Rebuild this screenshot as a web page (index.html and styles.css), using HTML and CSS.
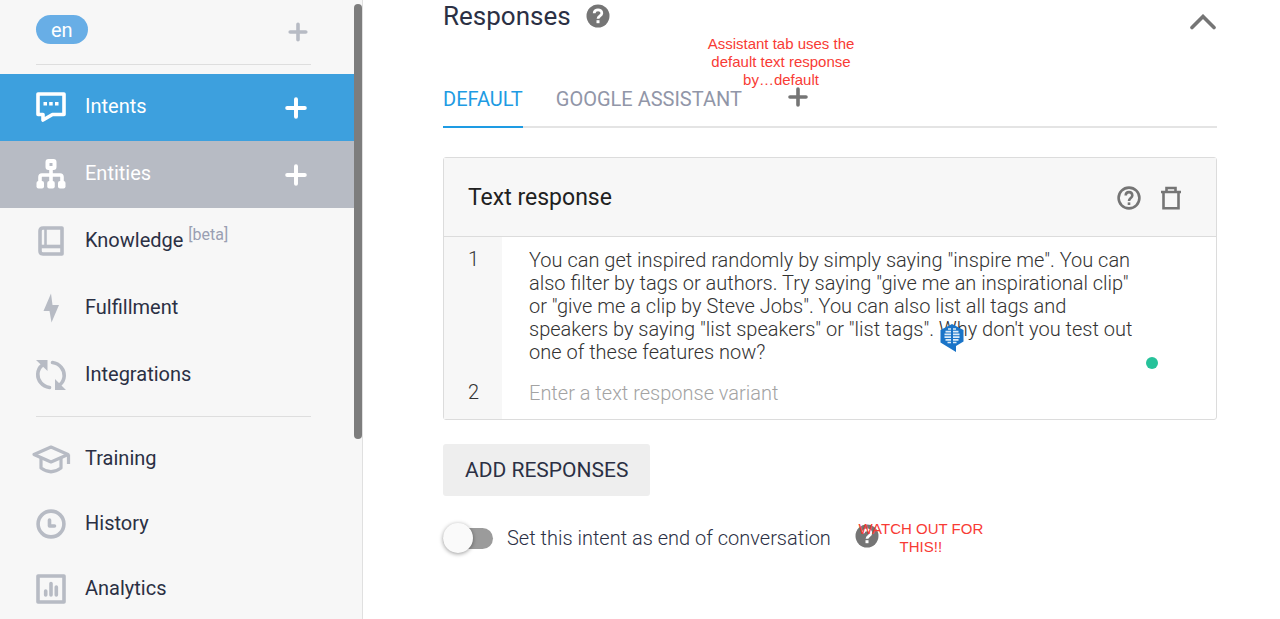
FILE: index.html
```html
<!DOCTYPE html>
<html lang="en">
<head>
<meta charset="utf-8">
<title>Intents</title>
<link rel="stylesheet" href="styles.css">
</head>
<body>
<div class="app">
  <aside class="sidebar">
    <nav class="nav">
      <div class="lang-bar">
        <button class="lang" type="button">en</button>
        <button class="plus plus-muted" type="button" aria-label="Add language">
          <svg width="20" height="20" viewBox="0 0 20 20"><path d="M10 2.200V17.800M2.200 10H17.800" stroke="currentColor" stroke-width="3.600" stroke-linecap="round"/></svg>
        </button>
      </div>
      <div class="row row-active">
        <a class="row-link" href="#intents">
          <svg class="icon" viewBox="0 0 40 40" fill="none" stroke="currentColor"><path d="M7 7h26v20.500H21.500L12 33v-5.500H7z" stroke-width="3.600" stroke-linejoin="round"/><path d="M12.500 15h3.500v3.500h-3.500zM18.200 15h3.500v3.500h-3.500zM24 15h3.500v3.500H24z" fill="currentColor" stroke="none"/></svg>
          Intents
        </a>
        <button class="plus" type="button" aria-label="Create intent">
          <svg width="20" height="20" viewBox="0 0 20 20"><path d="M10 2V18M2 10H18" stroke="currentColor" stroke-width="3.600" stroke-linecap="round"/></svg>
        </button>
      </div>
      <div class="row row-hover">
        <a class="row-link" href="#entities">
          <svg class="icon" viewBox="0 0 40 40" fill="none" stroke="currentColor"><rect x="16.500" y="7" width="7" height="7" rx="1" stroke-width="4"/><path d="M20 15v13M9 28v-5q0-2 2-2h18q2 0 2 2v5" stroke-width="3.600"/><g fill="currentColor" stroke="none"><rect x="5.500" y="27" width="7.500" height="7.500" rx="2"/><rect x="16.250" y="27" width="7.500" height="7.500" rx="2"/><rect x="27" y="27" width="7.500" height="7.500" rx="2"/></g></svg>
          Entities
        </a>
        <button class="plus" type="button" aria-label="Create entity">
          <svg width="20" height="20" viewBox="0 0 20 20"><path d="M10 2V18M2 10H18" stroke="currentColor" stroke-width="3.600" stroke-linecap="round"/></svg>
        </button>
      </div>
      <div class="row">
        <a class="row-link" href="#knowledge">
          <svg class="icon" viewBox="0 0 40 40" fill="none" stroke="currentColor"><path d="M31 7H12q-3 0-3 3v20q0 3 3 3h19z" stroke-width="3.600" stroke-linejoin="round"/><path d="M9 25.500h22" stroke-width="3.600"/><path d="M14.500 8v17" stroke-width="2.600"/></svg>
          <span>Knowledge <span class="beta">[beta]</span></span>
        </a>
      </div>
      <div class="row">
        <a class="row-link" href="#fulfillment">
          <svg class="icon" viewBox="0 0 40 40" fill="currentColor"><path d="M20 5.500 12.500 23H18.500L20.500 34.500 28 17H21.500z"/></svg>
          Fulfillment
        </a>
      </div>
      <div class="row">
        <a class="row-link" href="#integrations">
          <svg class="icon" viewBox="0 0 40 40" fill="none" stroke="currentColor"><path d="M18.500 32.500C11 31.500 6.500 25 6.800 19c.2-4 2-7 4.700-9M21.500 7.500C29 8.500 33.500 15 33.200 21c-.2 4-2 7-4.700 9" stroke-width="3.600" stroke-linecap="round"/><path d="M5 5h11.500v11zM35 35H24V24z" fill="currentColor" stroke="none"/></svg>
          Integrations
        </a>
      </div>
      <hr class="rule">
      <div class="row row-small">
        <a class="row-link" href="#training">
          <svg class="icon" viewBox="0 0 40 40" fill="none" stroke="currentColor" stroke-width="3.200" stroke-linejoin="round"><path d="M3 15.500 20 8l17 7.500L20 23z"/><path d="M10 19v10q10 7.500 20 0V19"/><path d="M37.500 15.500V25" stroke-linecap="butt"/></svg>
          Training
        </a>
      </div>
      <div class="row row-small">
        <a class="row-link" href="#history">
          <svg class="icon" viewBox="0 0 40 40" fill="none" stroke="currentColor" stroke-width="3.600"><circle cx="20" cy="20" r="12.900"/><path d="M18.500 16v6h5" stroke-linecap="round" stroke-linejoin="round"/></svg>
          History
        </a>
      </div>
      <div class="row row-small">
        <a class="row-link" href="#analytics">
          <svg class="icon" viewBox="0 0 40 40" fill="none" stroke="currentColor" stroke-width="3.600"><rect x="7" y="7" width="26" height="26" stroke-linejoin="round"/><path d="M14.700 22v4M20 14.500v11.500M25.300 18v8" stroke-linecap="round"/></svg>
          Analytics
        </a>
      </div>
    </nav>
    <div class="track"><div class="thumb"></div></div>
  </aside>

  <main class="main">
    <header class="head">
      <h1 class="title">Responses</h1>
      <svg class="help" viewBox="0 0 24 24"><circle cx="12" cy="12" r="11.500" fill="#757575"/><path d="M8.200 9.300C8.200 4.700 15.800 4.700 15.800 9.200C15.800 11.800 12 11.800 12 14.800" fill="none" stroke="#fff" stroke-width="2.800"/><rect x="10.500" y="16.200" width="3" height="3" fill="#fff"/></svg>
      <button class="collapse" type="button" aria-label="Collapse">
        <svg width="26" height="16" viewBox="0 0 26 16"><path d="M2 13.500 13 2.500 24 13.500" fill="none" stroke="currentColor" stroke-width="3.600" stroke-linecap="round"/></svg>
      </button>
    </header>

    <div class="tabs">
      <button class="tab tab-on" type="button">DEFAULT</button>
      <button class="tab" type="button">GOOGLE ASSISTANT</button>
      <button class="tab-add" type="button" aria-label="Add platform">
        <svg width="20" height="20" viewBox="0 0 20 20"><path d="M10 2V18M2 10H18" stroke="currentColor" stroke-width="3.600" stroke-linecap="round"/></svg>
      </button>
      <p class="note note-tabs">Assistant tab uses the default text response by…default</p>
    </div>

    <section class="card">
      <header class="card-head">
        <h2 class="card-title">Text response</h2>
        <button class="tool" type="button" aria-label="Help">
          <svg width="24" height="24" viewBox="0 0 24 24" fill="none" stroke="currentColor"><circle cx="12" cy="12" r="10.400" stroke-width="2.600"/><path d="M8.700 9.500C8.700 5 15.300 5 15.300 9.500C15.300 12 12 12 12 15" stroke-width="2.600"/><rect x="10.700" y="16.400" width="2.600" height="2.600" fill="currentColor" stroke="none"/></svg>
        </button>
        <button class="tool" type="button" aria-label="Delete">
          <svg width="20" height="24" viewBox="0 0 20 24" fill="none" stroke="currentColor" stroke-width="2.600"><path d="M2.500 6v16.200h15V6M0 6h20M5.500 5V2h9v3"/></svg>
        </button>
      </header>
      <div class="line">
        <label class="num" for="r1">1</label>
        <div class="field">
          <textarea class="text" id="r1" rows="5">You can get inspired randomly by simply saying "inspire me". You can also filter by tags or authors. Try saying "give me an inspirational clip" or "give me a clip by Steve Jobs". You can also list all tags and speakers by saying "list speakers" or "list tags". Why don't you test out one of these features now?</textarea>
          <svg class="brain" viewBox="0 0 24 30"><path d="M12 1 23.500 7V18.500L16 23V29L.5 19.500V7z" fill="#1a74c8"/><path d="M8 6h3M5.500 8.700H11M4.500 11.400H11M4.500 14.100H11M5.500 16.800H11M7.500 19.500H11M13 6h3M13 8.700h5.500M13 11.400h6.500M13 14.100h6.500M13 16.800h5.500M13 19.500h3.500" stroke="#dcebf8" stroke-width="1.700"/></svg>
          <span class="dot"></span>
        </div>
      </div>
      <div class="line">
        <label class="num" for="r2">2</label>
        <div class="field">
          <input class="text" id="r2" type="text" placeholder="Enter a text response variant">
        </div>
      </div>
    </section>

    <button class="add" type="button">ADD RESPONSES</button>

    <div class="end">
      <input class="switch" id="end" type="checkbox">
      <label class="end-label" for="end">Set this intent as end of conversation</label>
      <span class="end-help">
        <svg class="help" viewBox="0 0 24 24"><circle cx="12" cy="12" r="11.500" fill="#757575"/><path d="M8.200 9.300C8.200 4.700 15.800 4.700 15.800 9.200C15.800 11.800 12 11.800 12 14.800" fill="none" stroke="#fff" stroke-width="2.800"/><rect x="10.500" y="16.200" width="3" height="3" fill="#fff"/></svg>
        <span class="note note-end">WATCH OUT FOR THIS!!</span>
      </span>
    </div>
  </main>
</div>
</body>
</html>
```
FILE: styles.css
```css
* { box-sizing: border-box; }
body {
  margin: 0;
  height: 100vh;
  overflow: hidden;
  background: #fff;
  color: #2b3044;
  font: 20px/24px Roboto, "Liberation Sans", sans-serif;
}
button, input, textarea { font: inherit; color: inherit; margin: 0; }
button { border: 0; padding: 0; background: none; cursor: pointer; }
svg { display: block; flex: none; }
.app { display: flex; height: 100%; }

.sidebar {
  flex: none;
  display: flex;
  width: 363px;
  background: #f7f7f7;
  border-right: 1px solid #e0e0e0;
  overflow: hidden;
}
.nav { flex: 1; }
.lang-bar {
  display: flex;
  align-items: center;
  justify-content: space-between;
  height: 65px;
  margin: 0 43px 9px 36px;
  border-bottom: 1px solid #dedede;
}
.lang {
  height: 29px;
  padding: 0 15px;
  margin-bottom: 5px;
  border-radius: 15px;
  background: #68aee6;
  color: #fff;
}
.plus { color: #fff; }
.plus svg { width: 22px; height: 22px; }
.plus-muted { color: #b7bbc4; margin-right: 3px; }
.plus-muted svg { width: 20px; height: 20px; }
.row {
  display: flex;
  align-items: center;
  height: 67px;
  padding: 0 47px 0 31px;
  color: #2b3044;
}
.row-small { height: 65px; }
.row-link {
  flex: 1;
  display: flex;
  align-items: center;
  gap: 14px;
  padding-bottom: 4px;
  color: inherit;
  text-decoration: none;
}
.icon { width: 40px; height: 40px; margin-top: 2px; color: #b7bbc4; }
.row-active { background: #3da0de; color: #fff; }
.row-hover { background: #b7bbc4; color: #fff; }
.row-active .icon, .row-hover .icon { color: #fff; }
.beta { font-size: 16px; color: #9a9fb2; vertical-align: 7px; line-height: 1; }
.rule {
  height: 1px;
  margin: 7px 43px 10px 36px;
  border: 0;
  background: #dedede;
}
.track { width: 8px; padding-top: 4px; }
.thumb { height: 435px; border-radius: 4px; background: #7d7d7d; }

.main { flex: 1; min-width: 0; padding: 0 63px 0 80px; }
.head { display: flex; align-items: center; height: 32px; gap: 15px; }
.title { margin: 0; font-size: 26px; font-weight: 400; }
.help { width: 24px; height: 24px; }
.collapse { margin: 12px 1px 0 auto; color: #757575; }

.tabs {
  position: relative;
  display: flex;
  gap: 33px;
  height: 56px;
  margin: 40px 0 29px;
  box-shadow: inset 0 -2px #e4e4e4;
}
.tab { padding-bottom: 2px; color: #9196a8; }
.tab-on { color: #1e9be3; box-shadow: inset 0 -2px #1e9be3; }
.tab-add { margin: 0 0 6px 13px; color: #757575; }
.note {
  position: absolute;
  margin: 0;
  color: #f83b35;
  font: 15px/18px "Liberation Sans", Arial, sans-serif;
  text-align: center;
}
.note-tabs { left: 258px; top: -37px; width: 160px; }

.card { border: 1px solid #dcdcdc; border-radius: 3px; }
.card-head {
  display: flex;
  align-items: center;
  gap: 20px;
  height: 79px;
  padding: 2px 35px 0 24px;
  background: #f7f7f7;
  border-bottom: 1px solid #dcdcdc;
}
.card-title { flex: 1; margin: 0; font-size: 23px; font-weight: 400; color: #212121; }
.tool { color: #757575; }
.line { display: flex; font-weight: 300; color: #333; }
.num { flex: none; width: 58px; padding: 10px 0 0 24px; background: #f7f7f7; }
.field { position: relative; flex: 1; padding: 12px 80px 6px 27px; }
.text {
  display: block;
  width: 100%;
  padding: 0;
  border: 0;
  outline: 0;
  background: none;
  resize: none;
  overflow: hidden;
  line-height: 23px;
}
.line:last-child .field { padding-bottom: 14px; }
.text::placeholder { color: #a3a3a3; opacity: 1; }
.brain { position: absolute; left: 438px; top: 86px; width: 24px; height: 30px; }
.dot {
  position: absolute;
  right: 58px;
  bottom: 1px;
  width: 12px;
  height: 12px;
  border-radius: 50%;
  background: #26c29a;
}

.add {
  display: block;
  height: 52px;
  margin: 24px 0 26px;
  padding: 0 22px;
  border-radius: 3px;
  background: #eee;
  font-size: 21px;
}
.end { display: flex; align-items: center; height: 32px; font-weight: 300; }
.switch {
  appearance: none;
  flex: none;
  position: relative;
  width: 50px;
  height: 21px;
  margin-right: 14px;
  border-radius: 11px;
  background: #9b9b9b;
}
.switch::before {
  content: "";
  position: absolute;
  left: 0;
  top: -5px;
  width: 30px;
  height: 30px;
  border-radius: 50%;
  background: #fafafa;
  box-shadow: 0 1px 4px rgba(0, 0, 0, .4);
}
.end-help { position: relative; margin: 0 0 4px 24px; }
.note-end { left: -4px; top: -4px; width: 140px; }
```
